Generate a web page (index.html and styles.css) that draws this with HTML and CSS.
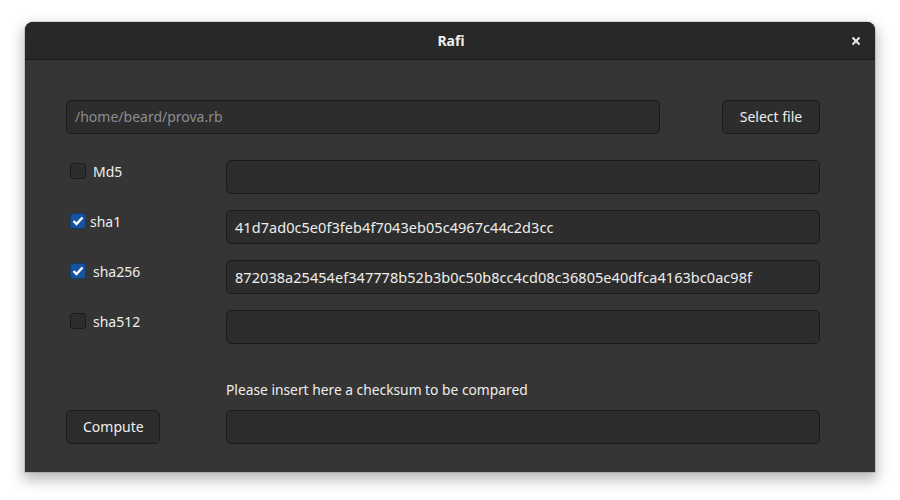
FILE: index.html
```html
<!DOCTYPE html>
<html>
<head>
<meta charset="utf-8">
<link rel="stylesheet" href="styles.css">
</head>
<body>
<div class="window">
  <div class="titlebar">
    <span class="title">Rafi</span>
    <span class="close">
      <svg width="10" height="10" viewBox="0 0 10 10"><path d="M1.5 1.5L8.5 8.5M8.5 1.5L1.5 8.5" stroke="#eeeeec" stroke-width="2"/></svg>
    </span>
  </div>
  <div class="content">
    <div class="file-row">
      <div class="entry file-entry"><span class="dim">/home/beard/prova.rb</span></div>
      <button class="btn select-btn">Select file</button>
    </div>
    <div class="hash-grid">
      <label class="check"><span class="box"></span><span class="lbl">Md5</span></label>
      <div class="entry"></div>

      <label class="check"><span class="box on"><svg width="12" height="10" viewBox="0 0 12 10"><path d="M1.5 5L4.5 8L10.5 1.5" fill="none" stroke="#fff" stroke-width="2.4"/></svg></span><span class="lbl tight">sha1</span></label>
      <div class="entry hash">41d7ad0c5e0f3feb4f7043eb05c4967c44c2d3cc</div>

      <label class="check"><span class="box on"><svg width="12" height="10" viewBox="0 0 12 10"><path d="M1.5 5L4.5 8L10.5 1.5" fill="none" stroke="#fff" stroke-width="2.4"/></svg></span><span class="lbl">sha256</span></label>
      <div class="entry hash">872038a25454ef347778b52b3b0c50b8cc4cd08c36805e40dfca4163bc0ac98f</div>

      <label class="check"><span class="box"></span><span class="lbl">sha512</span></label>
      <div class="entry"></div>
    </div>
    <div class="compare">
      <div></div>
      <div class="hint">Please insert here a checksum to be compared</div>
      <button class="btn compute-btn">Compute</button>
      <div class="entry"></div>
    </div>
  </div>
</div>
</body>
</html>
```
FILE: styles.css
```css
html, body {
  margin: 0;
  padding: 0;
  background: #ffffff;
}
body {
  font-family: "Noto Sans", "Open Sans", sans-serif;
  font-size: 14px;
  color: #eeeeec;
  min-height: 500px;
  padding-top: 22px;
  box-sizing: border-box;
}
.window {
  margin: 0 25px;
  width: 850px;
  height: 450px;
  background: #353535;
  border-radius: 8px 8px 0 0;
  box-shadow: 0 6px 14px 2px rgba(0,0,0,0.28), 0 0 0 1px rgba(0,0,0,0.12);
  display: flex;
  flex-direction: column;
  overflow: hidden;
}
.titlebar {
  height: 37px;
  background: #282828;
  border-bottom: 1px solid #1b1b1b;
  display: flex;
  align-items: center;
  justify-content: center;
  position: relative;
}
.title {
  font-weight: bold;
  font-size: 14px;
  color: #eeeeec;
  margin-left: 2px;
}
.close {
  position: absolute;
  right: 14px;
  top: 14px;
  width: 10px;
  height: 10px;
  display: flex;
}
.content {
  padding: 40px 55px 0 41px;
  display: flex;
  flex-direction: column;
}
.entry {
  box-sizing: border-box;
  height: 34px;
  background: #2d2d2d;
  border: 1px solid #1b1b1b;
  border-radius: 5px;
  padding: 0 8px 1px 8px;
  display: flex;
  align-items: center;
  color: #eeeeec;
  font-size: 14px;
  white-space: nowrap;
}
.entry.hash {
  font-size: 14.5px;
  letter-spacing: 0.05px;
}
.dim {
  color: #8b8e8f;
}
.file-row {
  display: flex;
  gap: 62px;
  align-items: center;
}
.file-entry {
  flex: 1;
}
.btn {
  box-sizing: border-box;
  height: 34px;
  background: #2d2d2d;
  border: 1px solid #1b1b1b;
  border-radius: 5px;
  color: #eeeeec;
  font-family: inherit;
  font-size: 14px;
  padding: 0 16px 1px 16px;
}
.select-btn {
  width: 98px;
}
.compute-btn {
  width: 94px;
}
.hash-grid {
  margin-top: 26px;
  display: grid;
  grid-template-columns: 160px 1fr;
  row-gap: 16px;
}
.check {
  display: flex;
  align-items: center;
  height: 20px;
  margin-top: 1px;
  padding-left: 4px;
}
.box {
  box-sizing: border-box;
  width: 16px;
  height: 16px;
  border: 1px solid #1b1b1b;
  background: #2d2d2d;
  border-radius: 3px;
  display: flex;
  align-items: center;
  justify-content: center;
}
.box.on {
  background: #15539e;
  border-color: #0f3b71;
}
.lbl {
  margin-left: 7px;
}
.lbl.tight {
  margin-left: 4px;
}
.compare {
  margin-top: 36px;
  display: grid;
  grid-template-columns: 160px 1fr;
  row-gap: 9px;
}
.hint {
  height: 21px;
  line-height: 20px;
  font-size: 13.8px;
}
```
